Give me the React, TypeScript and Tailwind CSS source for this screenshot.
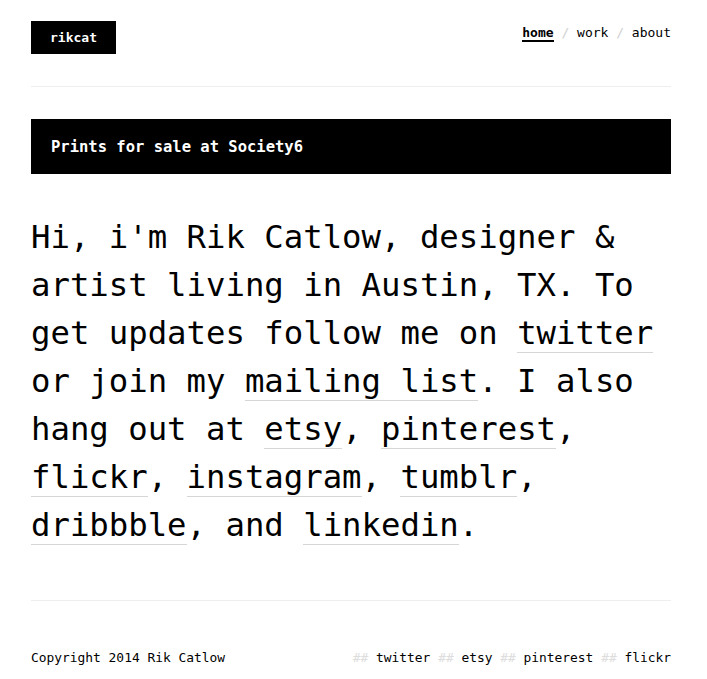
import React from "react";

const Link = ({ children }: { children: React.ReactNode }) => (
  <a href="#" className="border-b border-[#d6d6d6] text-black no-underline">
    {children}
  </a>
);

export default function App() {
  return (
    <main className="min-h-screen bg-white text-black font-['DejaVu_Sans_Mono',monospace]">
      <div className="pl-[31px] pr-[36px] pt-[21px]">
        {/* header */}
        <header className="flex items-start justify-between">
          <a href="#" className="bg-black px-[19px] py-[7px] text-[13px] font-bold leading-[19px] text-white">
            rikcat
          </a>
          <nav className="mt-[2px] text-[13px] leading-5 whitespace-pre">
            <a href="#" className="border-b-2 border-black font-bold">home</a>
            <span className="text-[#cfcfcf]"> / </span>
            <a href="#">work</a>
            <span className="text-[#cfcfcf]"> / </span>
            <a href="#">about</a>
          </nav>
        </header>

        <hr className="mt-[32px] border-t border-[#eeeeee]" />

        {/* banner */}
        <a href="#" className="mt-[32px] block bg-black px-5 py-[15.5px] text-[15.5px] font-bold leading-6 text-white">
          Prints for sale at Society6
        </a>

        {/* intro */}
        <p className="mt-[39px] text-[32.3px] leading-[48px]">
          Hi, i'm Rik Catlow, designer &amp; artist living in Austin, TX. To get updates follow me on{" "}
          <Link>twitter</Link> or join my <Link>mailing list</Link>. I also hang out at <Link>etsy</Link>,{" "}
          <Link>pinterest</Link>, <Link>flickr</Link>, <Link>instagram</Link>, <Link>tumblr</Link>,{" "}
          <Link>dribbble</Link>, and <Link>linkedin</Link>.
        </p>

        <hr className="mt-[51px] border-t border-[#eeeeee]" />

        {/* footer */}
        <footer className="mt-[47px] flex justify-between text-[12.9px] leading-5">
          <span>Copyright 2014 Rik Catlow</span>
          <span className="whitespace-pre">
            <span className="text-[#dddddd]">## </span>twitter
            <span className="text-[#dddddd]"> ## </span>etsy
            <span className="text-[#dddddd]"> ## </span>pinterest
            <span className="text-[#dddddd]"> ## </span>flickr
          </span>
        </footer>
      </div>
    </main>
  );
}
